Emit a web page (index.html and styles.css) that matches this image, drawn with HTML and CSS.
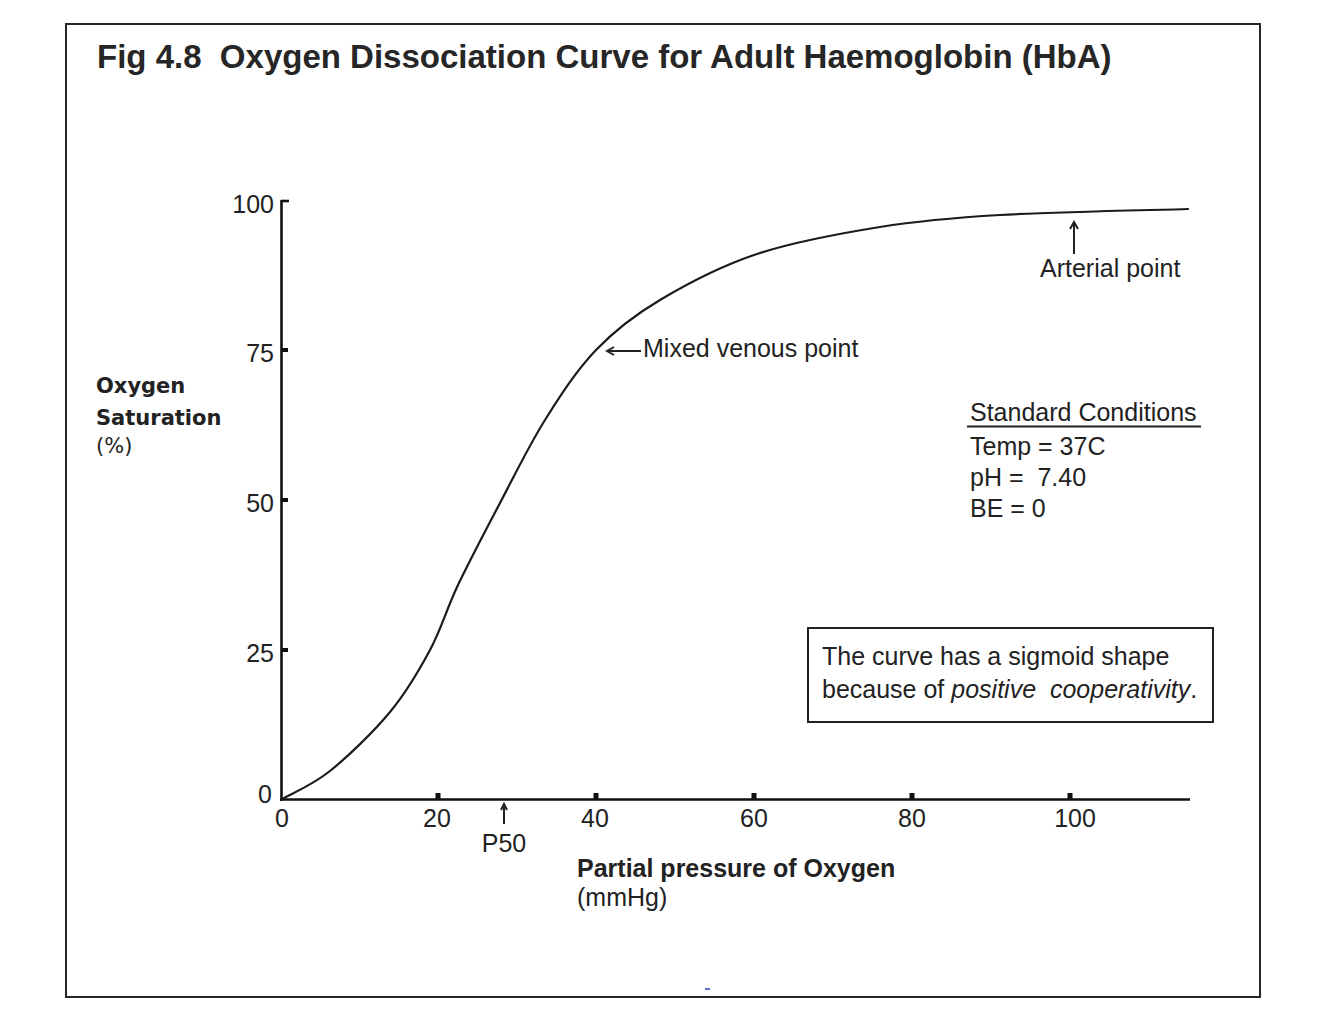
FILE: index.html
```html
<!DOCTYPE html>
<html lang="en">
<head>
<meta charset="utf-8">
<title>Fig 4.8 Oxygen Dissociation Curve for Adult Haemoglobin (HbA)</title>
<link rel="stylesheet" href="styles.css">
</head>
<body>
<div class="figure">
  <h1 class="figure-title">Fig 4.8  Oxygen Dissociation Curve for Adult Haemoglobin (HbA)</h1>
  <svg class="chart" viewBox="67 110 1192 886" width="1192" height="886" xmlns="http://www.w3.org/2000/svg">
    <!-- axes -->
    <line class="axis" x1="281.5" y1="200" x2="281.5" y2="801"/>
    <line class="axis" x1="280" y1="799.5" x2="1190" y2="799.5"/>
    <line class="axis" x1="281" y1="201" x2="289" y2="201"/>
    <rect class="tick" x="282" y="348" width="6" height="4"/>
    <rect class="tick" x="282" y="498" width="6" height="4"/>
    <rect class="tick" x="282" y="648" width="6" height="4"/>
    <rect class="tick" x="435.5" y="793" width="5" height="6"/>
    <rect class="tick" x="593.5" y="793" width="5" height="6"/>
    <rect class="tick" x="751.5" y="793" width="5" height="6"/>
    <rect class="tick" x="909.5" y="793" width="5" height="6"/>
    <rect class="tick" x="1067.5" y="793" width="5" height="6"/>

    <!-- y tick labels -->
    <text class="lbl end" x="274" y="213">100</text>
    <text class="lbl end" x="274" y="362">75</text>
    <text class="lbl end" x="274" y="512">50</text>
    <text class="lbl end" x="274" y="662">25</text>
    <text class="lbl end" x="272" y="803">0</text>

    <!-- x tick labels -->
    <text class="lbl mid" x="282" y="827">0</text>
    <text class="lbl mid" x="437" y="827">20</text>
    <text class="lbl mid" x="595" y="827">40</text>
    <text class="lbl mid" x="754" y="827">60</text>
    <text class="lbl mid" x="912" y="827">80</text>
    <text class="lbl mid" x="1075" y="827">100</text>

    <!-- axis titles -->
    <text class="ytitle" x="96" y="393">Oxygen</text>
    <text class="ytitle" x="96" y="425">Saturation</text>
    <text class="ytitle-sub" x="96" y="453">(%)</text>
    <text class="lbl bold" x="577" y="877">Partial pressure of Oxygen</text>
    <text class="lbl" x="577" y="906">(mmHg)</text>

    <!-- curve -->
    <path class="curve" d="M282 799
      C290 794.33 312 785.5 330 771
      C348 756.5 373.33 732.17 390 712
      C406.67 691.83 418.67 671.17 430 650
      C441.33 628.83 446.33 609.5 458 585
      C469.67 560.5 485.5 530.5 500 503
      C514.5 475.5 529 445.5 545 420
      C561 394.5 576.83 370 596 350
      C615.17 330 633.17 316 660 300
      C686.83 284 720.33 266.17 757 254
      C793.67 241.83 839.5 233.5 880 227
      C920.5 220.5 948.67 218 1000 215
      C1051.33 212 1156.67 210 1188 209"/>

    <!-- arrows -->
    <line class="arrow" x1="608" y1="351" x2="641" y2="351"/>
    <path class="arrow" d="M614 347 L607 351 L614 355"/>
    <line class="arrow" x1="1074" y1="222" x2="1074" y2="254"/>
    <path class="arrow" d="M1070 229 L1074 222 L1078 229"/>
    <line class="arrow" x1="504" y1="804" x2="504" y2="824"/>
    <path class="arrow" d="M501 810 L504 804 L507 810"/>

    <!-- annotations -->
    <text class="lbl" x="643" y="357">Mixed venous point</text>
    <text class="lbl" x="1040" y="277">Arterial point</text>
    <text class="lbl" x="970" y="421">Standard Conditions</text>
    <line class="underline" x1="967" y1="426.5" x2="1201" y2="426.5"/>
    <text class="lbl" x="970" y="455">Temp = 37C</text>
    <text class="lbl pre" x="970" y="486">pH =  7.40</text>
    <text class="lbl" x="970" y="517">BE = 0</text>
    <text class="lbl mid" x="504" y="852">P50</text>

    <!-- note box -->
    <rect class="note-box" x="808" y="628" width="405" height="94"/>
    <text class="lbl" x="822" y="665">The curve has a sigmoid shape</text>
    <text class="lbl pre" x="822" y="698">because of <tspan class="em">positive  cooperativity</tspan>.</text>

    <rect class="speck" x="705" y="988" width="5" height="2"/>
  </svg>
</div>
</body>
</html>
```

FILE: styles.css
```css
html, body {
  margin: 0;
  padding: 0;
  background: #ffffff;
}

body {
  font-family: "Liberation Sans", Arial, sans-serif;
  color: #222222;
}

.figure {
  box-sizing: border-box;
  width: 1196px;
  height: 975px;
  margin: 23px 0 0 65px;
  border: 2px solid #262626;
  display: flex;
  flex-direction: column;
}

.figure-title {
  box-sizing: border-box;
  height: 85px;
  margin: 0;
  padding: 12px 0 0 30px;
  font-family: "Liberation Sans", Arial, sans-serif;
  font-size: 33px;
  line-height: 40px;
  font-weight: bold;
  color: #262626;
  white-space: pre;
}

.chart {
  display: block;
  width: 1192px;
  height: 886px;
  flex: none;
}

.axis {
  stroke: #111111;
  stroke-width: 2.6;
  fill: none;
}

.tick {
  fill: #111111;
}

.curve {
  fill: none;
  stroke: #1c1c1c;
  stroke-width: 2.2;
  stroke-linejoin: round;
  stroke-linecap: round;
}

.arrow {
  fill: none;
  stroke: #222222;
  stroke-width: 2;
}

.underline {
  stroke: #222222;
  stroke-width: 2;
}

.note-box {
  fill: none;
  stroke: #222222;
  stroke-width: 2;
}

.speck {
  fill: #5b6fd6;
}

.lbl {
  font-family: "Liberation Sans", Arial, sans-serif;
  font-size: 25px;
  fill: #222222;
}

.lbl.end {
  text-anchor: end;
}

.lbl.mid {
  text-anchor: middle;
}

.lbl.bold {
  font-weight: bold;
}

.pre {
  white-space: pre;
}

.em {
  font-style: italic;
}

.ytitle {
  font-family: "DejaVu Sans", Verdana, sans-serif;
  font-size: 21px;
  font-weight: bold;
  fill: #222222;
}

.ytitle-sub {
  font-family: "DejaVu Sans", Verdana, sans-serif;
  font-size: 21px;
  fill: #222222;
}
```
